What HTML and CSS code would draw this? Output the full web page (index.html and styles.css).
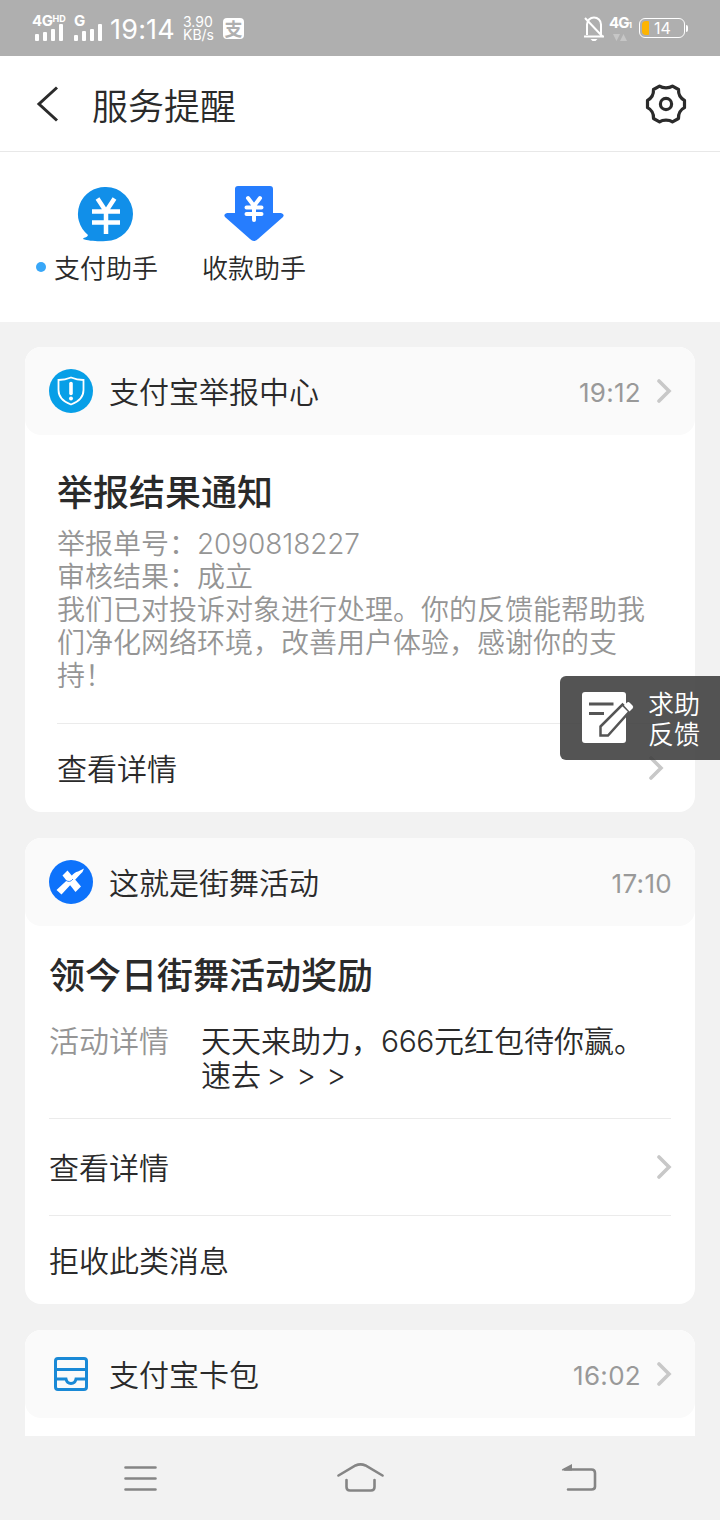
FILE: index.html
```html
<!DOCTYPE html>
<html lang="zh-CN">
<head>
<meta charset="utf-8">
<title>服务提醒</title>
<link rel="stylesheet" href="styles.css">
</head>
<body>
<div class="screen">
  <div class="status">
    <div class="signal signal-hd"><span class="net">4G<small>HD</small></span>
      <svg width="29" height="18" viewBox="0 0 29 18" fill="#fff"><rect x="0" y="11" width="4" height="7" rx="1"/><rect x="8" y="9" width="4" height="9" rx="1"/><rect x="16" y="6" width="4" height="12" rx="1"/><rect x="24" y="1" width="4" height="17" rx="1"/></svg></div>
    <div class="signal"><span class="net">G</span>
      <svg width="29" height="18" viewBox="0 0 29 18" fill="#fff"><rect x="0" y="12" width="4" height="6" rx="1"/><rect x="8" y="8" width="4" height="10" rx="1"/><rect x="16" y="6" width="4" height="12" rx="1"/><rect x="24" y="1" width="4" height="17" rx="1"/></svg></div>
    <span class="clock">19:14</span>
    <span class="speed">3.90<br>KB/s</span>
    <span class="pay-badge">支</span>
    <div class="status-right">
      <svg width="20" height="26" viewBox="0 0 20 26" fill="none" stroke="#fff" stroke-width="2"><path d="M3 20V9.500a7 7 0 0 1 14 0V20M0 21.500h20M1 3l18 19"/><path d="M6.500 24h7l-2 2h-3z" fill="#fff" stroke="none"/></svg>
      <div class="data"><span class="data-label">4G<small>1</small></span><svg width="14" height="8" viewBox="0 0 14 8" fill="#c6c6c6"><path d="M0 1h7L3.500 8zM7 8h7L10.500 1z"/></svg></div>
      <div class="battery"><i class="charge"></i><span>14</span></div><i class="cap"></i>
    </div>
  </div>

  <header class="topbar">
    <svg width="24" height="36" viewBox="0 0 24 36" fill="none" stroke="#2b2b2b" stroke-width="3"><path d="M22 1.500 4 18 22 34.500"/></svg>
    <h1>服务提醒</h1>
    <svg class="gear" width="42" height="42" viewBox="-21 -21 42 42" fill="none" stroke="#2b2b2b" stroke-width="3.200" stroke-linejoin="round"><path d="M-6.500-17.800C-3-15.500 3-15.500 6.500-17.800L12.500-14.500C12.300-9.800 14-6 18.500-3.700V3.700C14 6 12.300 9.800 12.500 14.500L6.500 17.800C3 15.500-3 15.500-6.500 17.800L-12.500 14.500C-12.300 9.800-14 6-18.500 3.700V-3.700C-14-6-12.300-9.800-12.500-14.500Z"/><circle r="5.600"/></svg>
  </header>

  <nav class="apps">
    <div class="app">
      <svg width="60" height="60" viewBox="0 0 60 60"><path d="M30 3a27 27 0 1 1 0 54C22 57.500 12 57 7 55 7 53.500 11 54 12 51A27 27 0 0 1 30 3z" fill="#118fe9"/><path d="M21.500 14.500l8.500 13 8.500-13M16 27.500h28M16 38.500h28M30 26v24" fill="none" stroke="#fff" stroke-width="4.500"/></svg>
      <span class="app-name unread">支付助手</span>
    </div>
    <div class="app">
      <svg width="60" height="60" viewBox="0 0 60 60"><path d="M14 2h32q3 0 3 3v24h8q4 1 2 4L34 55q-4 4-8 0L1 33q-2-3 2-4h8V5q0-3 3-3z" fill="#267dfe"/><path d="M24 14l6 8 6-8M22.500 23.500h15M22.500 30h15M30 22v14" fill="none" stroke="#fff" stroke-width="4" stroke-linecap="round"/></svg>
      <span class="app-name">收款助手</span>
    </div>
  </nav>

  <main class="feed">
    <section class="card">
      <div class="card-head">
        <svg width="44" height="44" viewBox="0 0 44 44"><circle cx="22" cy="22" r="22" fill="#079fe7"/><path d="M22 8.500q6 2.500 12.500 2.500V21q0 10-12.500 14.500Q9.500 31 9.500 21V11Q16 11 22 8.500z" fill="none" stroke="#fff" stroke-width="1.800"/><path d="M22 14.500v10" stroke="#fff" stroke-width="3.600" stroke-linecap="round"/><circle cx="22" cy="29.500" r="2" fill="#fff"/></svg>
        <span class="sender">支付宝举报中心</span><time>19:12</time>
        <svg class="arrow" width="16" height="24" viewBox="0 0 16 24"><path d="M3 2l10 10L3 22"/></svg>
      </div>
      <div class="card-body report">
        <h2>举报结果通知</h2>
        <p class="message">举报单号：<span class="num">2090818227</span><br>审核结果：成立<br>我们已对投诉对象进行处理。你的反馈能帮助我<br>们净化网络环境，改善用户体验，感谢你的支<br>持！</p>
        <div class="action"><span>查看详情</span><svg class="arrow" width="16" height="24" viewBox="0 0 16 24"><path d="M3 2l10 10L3 22"/></svg></div>
      </div>
    </section>

    <section class="card">
      <div class="card-head">
        <svg width="44" height="44" viewBox="0 0 44 44"><circle cx="22" cy="22" r="22" fill="#0d72fb"/><path d="M13.500 15.500l5-5L32 26.500 26.500 32z" fill="#fff"/><path d="M7.500 30L22.500 16q3-4 6.500-4.500l6-3q-1 4-4 6L12.500 34.500z" fill="#fff"/><path d="M17 20.500q4 2.500 7-1.500" fill="none" stroke="#0d72fb" stroke-width=".8"/></svg>
        <span class="sender">这就是街舞活动</span><time>17:10</time>
      </div>
      <div class="card-body dance">
        <h2>领今日街舞活动奖励</h2>
        <div class="detail"><span class="label">活动详情</span><span>天天来助力，<span class="num">666</span>元红包待你赢。<br>速去<span class="gt">&gt;</span><span class="gt">&gt;</span><span class="gt">&gt;</span></span></div>
        <div class="action"><span>查看详情</span><svg class="arrow" width="16" height="24" viewBox="0 0 16 24"><path d="M3 2l10 10L3 22"/></svg></div>
        <div class="action reject"><span>拒收此类消息</span></div>
      </div>
    </section>

    <section class="card">
      <div class="card-head">
        <svg width="44" height="44" viewBox="0 0 44 44" fill="none" stroke="#1989d6" stroke-width="3"><rect x="6.500" y="6.500" width="31" height="31" rx="2.500"/><path d="M6.500 17.500h31M6.500 27H17q1 4.500 5 4.500T27 27h10.500"/></svg>
        <span class="sender">支付宝卡包</span><time>16:02</time>
        <svg class="arrow" width="16" height="24" viewBox="0 0 16 24"><path d="M3 2l10 10L3 22"/></svg>
      </div>
      <div class="card-body next"></div>
    </section>
  </main>

  <footer class="keys">
    <svg width="48" height="32" viewBox="0 0 48 32"><path d="M8.500 5.500h30M8.500 16.500h30M8.500 27.500h30"/></svg>
    <svg width="48" height="32" viewBox="0 0 48 32"><path d="M2.500 13.500 19.500 3.500q5-2.200 10 0l17 10M10.500 18v7q0 3.500 3.500 3.500h21q3.500 0 3.500-3.500v-7"/></svg>
    <svg width="48" height="32" viewBox="0 0 48 32"><path d="M10 7.500h26.500q3.500 0 3.500 3.500v13.500q0 3-3.500 3H13"/><path class="tip" d="M7 8.500q-.5-1 .5-1.500L17 2v6.500H7z"/></svg>
  </footer>

  <aside class="help">
    <svg width="54" height="52" viewBox="0 0 54 52"><rect x="1" y="0" width="44" height="51" rx="3" fill="#fff"/><path d="M8 12h24.500M8 21.500h15" stroke="#555" stroke-width="3"/><path d="M19.500 34.500 41.500 12.500l7 7L27 43.500h-7.500z" fill="#fff" stroke="#555" stroke-width="2.500"/><path d="M43 13.500l3-3q1.500-1 3 .5l2.500 2.500q1.500 1.500 0 3l-3 3z" fill="#fff"/></svg>
    <span>求助<br>反馈</span>
  </aside>
</div>
</body>
</html>
```

FILE: styles.css
```css
* { box-sizing: border-box; }
body { margin: 0; background: #f2f2f2; color: #2a2a2a; font-family: "Noto Sans CJK SC", sans-serif; font-weight: 350; }
h1, h2, p { margin: 0; }
svg { display: block; flex: none; }
.screen { position: relative; width: 720px; height: 1520px; display: flex; flex-direction: column; overflow: hidden; }

.status { height: 56px; flex: none; background: #afafaf; color: #fff; display: flex; align-items: center; padding: 0 32px 0 32px; font-family: Inter, "Noto Sans CJK SC", sans-serif; font-weight: 400; }
.signal { width: 42px; height: 26px; display: flex; flex-direction: column; }
.signal svg { margin: -4px 0 0 3px; }
.signal + .signal svg { margin-left: 0; }
.net { font-size: 15px; line-height: 12px; font-weight: 700; letter-spacing: -.5px; white-space: nowrap; }
.net small { font-size: 9px; vertical-align: 4px; line-height: 1px; letter-spacing: 0; }
.clock { font-size: 27px; line-height: 56px; width: 67px; margin: 3px 0 0 -6px; letter-spacing: .2px; }
.speed { font-size: 14px; line-height: 13px; width: 40px; margin-left: 6px; white-space: nowrap; }
.pay-badge { width: 21px; height: 21px; border-radius: 4px; background: #fff; color: #afafaf; font: 700 18px/20px "Noto Sans CJK SC", sans-serif; text-align: center; }
.status-right { display: flex; align-items: center; margin-left: auto; }
.data { width: 26px; margin-left: 5px; }
.data svg { margin: 1px 0 0 4px; }
.data-label { display: block; font-size: 15px; line-height: 14px; font-weight: 700; letter-spacing: -.9px; white-space: nowrap; }
.data-label small { font-size: 8px; }
.battery { width: 46px; height: 20px; margin-left: 4px; border: 1.5px solid #fff; border-radius: 6px; display: flex; align-items: center; padding-left: 2px; font-size: 16px; line-height: 16px; }
.charge { width: 7px; height: 14px; background: #fdb400; border-radius: 4px 1px 1px 4px; margin-right: 5px; }
.cap { width: 2px; height: 7px; margin: 0 0 0 1px; background: #fff; border-radius: 0 2px 2px 0; }

.topbar { height: 96px; flex: none; background: #fff; border-bottom: 1px solid #e8e8e8; display: flex; align-items: center; padding: 0 33px 0 35px; }
.topbar h1 { font-size: 36px; line-height: 48px; font-weight: 350; margin-left: 33px; }
.gear { margin-left: auto; }
.apps { height: 170px; flex: none; background: #fff; display: flex; padding: 32px 0 0 32px; }
.app { width: 148px; display: flex; flex-direction: column; align-items: center; }
.app-name { position: relative; font-size: 26px; line-height: 36px; margin-top: 5px; }
.app-name.unread::before { content: ""; position: absolute; left: -18px; top: 13px; width: 10px; height: 10px; border-radius: 50%; background: #38a7f8; }

.feed { flex: 1; min-height: 0; overflow: hidden; padding: 25px 25px 0; display: flex; flex-direction: column; gap: 26px; }
.card { background: #fff; border-radius: 16px; overflow: hidden; flex: none; }
.card-head { height: 88px; background: #fafafa; border-radius: 16px; display: flex; align-items: center; padding: 0 23px 0 24px; }
.sender { font-size: 30px; line-height: 44px; margin: -2px 0 0 16px; }
time { margin-left: auto; color: #999; font: 400 26px/44px Inter, sans-serif; letter-spacing: .3px; padding-top: 3px; }
.arrow { fill: none; stroke: #c8c8c8; stroke-width: 3.6; stroke-linecap: round; }
time + .arrow { margin-left: 15px; }
.card-body h2 { font-size: 36px; line-height: 48px; font-weight: 500; }
.report { height: 377px; padding: 31px 32px 0; }
.report .arrow { margin: 0 -1px 0 0; }
.dance .arrow { margin-right: -1px; }
.message { color: #959595; font-size: 28px; line-height: 33px; margin-top: 12px; white-space: nowrap; }
.num { font-family: Inter, sans-serif; line-height: 1px; letter-spacing: -.1px; }
.report .action { margin-top: 32px; }
.report .action span { margin-top: -2px; }
.dance { height: 378px; padding: 23px 24px 0; }
.detail { display: flex; gap: 32px; font-size: 30px; line-height: 34px; margin-top: 25px; }
.detail .label { color: #959595; }
.detail .num { letter-spacing: -.4px; }
.gt { display: inline-block; width: 30px; text-align: center; font-family: Inter, sans-serif; line-height: 1px; }
.action { border-top: 1px solid #ebebeb; height: 97px; display: flex; align-items: center; justify-content: space-between; font-size: 30px; line-height: 44px; }
.report .action { height: 88px; }
.dance .action { margin-top: 28px; }
.dance .reject { margin-top: 0; height: 89px; }
.dance .action span { margin-top: -2px; }
.next { height: 100px; }

.keys { height: 84px; flex: none; background: #f2f2f2; display: flex; justify-content: space-between; align-items: center; padding: 0 117px; }
.keys path { fill: none; stroke: #858585; stroke-width: 2.6; stroke-linecap: round; }
.keys .tip { fill: #858585; stroke: none; }
.help { position: absolute; right: 0; top: 676px; width: 160px; height: 84px; border-radius: 6px 0 0 6px; background: rgba(60, 60, 60, .88); color: #fff; display: flex; align-items: center; padding-left: 21px; gap: 13px; font-size: 26px; line-height: 30px; }
```
